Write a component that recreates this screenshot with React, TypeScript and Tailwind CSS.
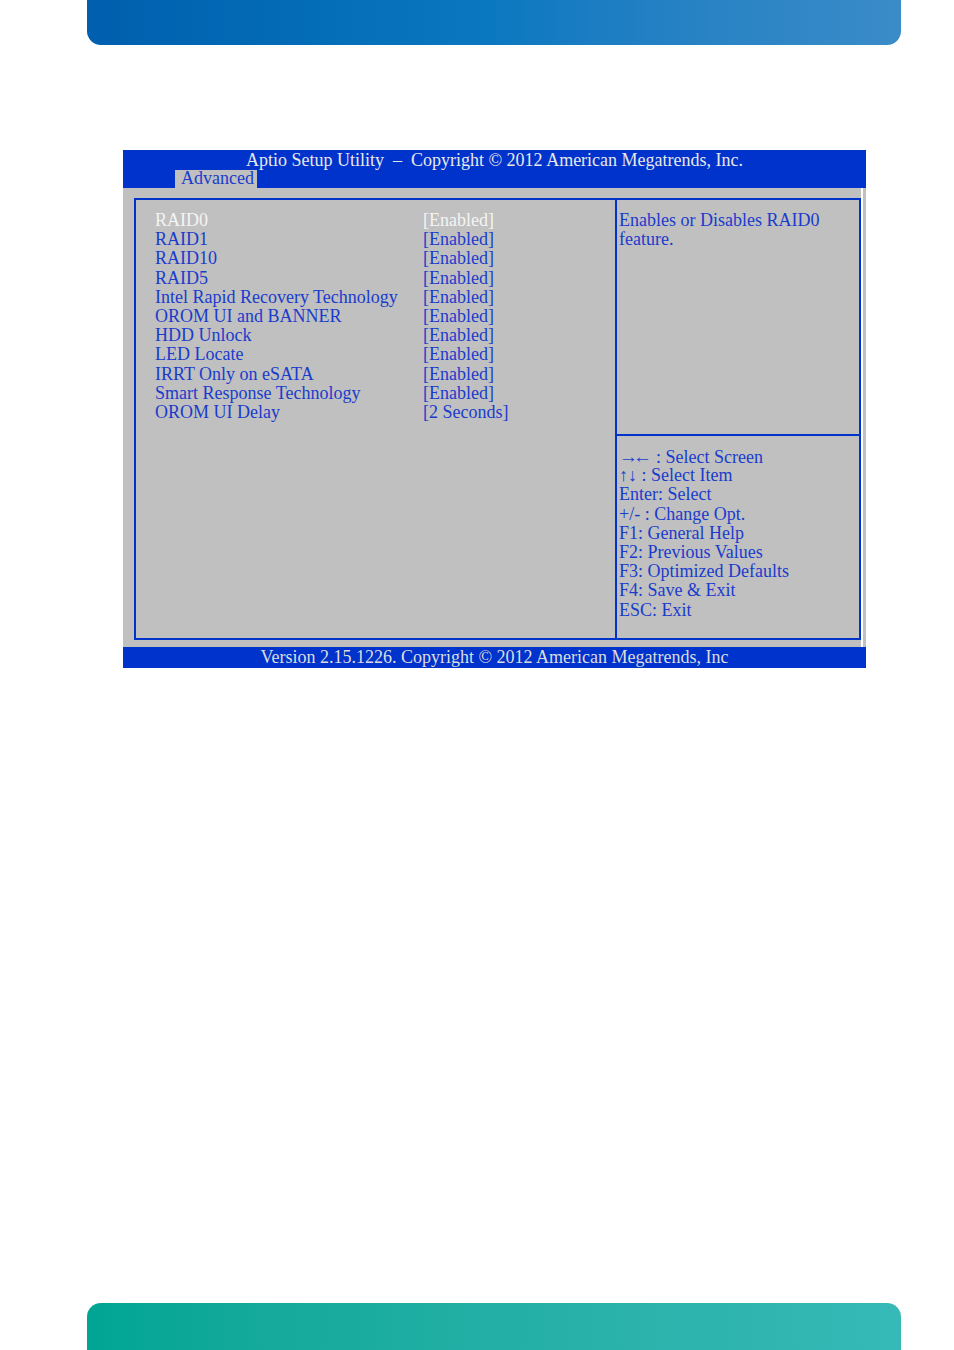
import React from "react";

const items: [string, string][] = [
  ["RAID0", "[Enabled]"],
  ["RAID1", "[Enabled]"],
  ["RAID10", "[Enabled]"],
  ["RAID5", "[Enabled]"],
  ["Intel Rapid Recovery Technology", "[Enabled]"],
  ["OROM UI and BANNER", "[Enabled]"],
  ["HDD Unlock", "[Enabled]"],
  ["LED Locate", "[Enabled]"],
  ["IRRT Only on eSATA", "[Enabled]"],
  ["Smart Response Technology", "[Enabled]"],
  ["OROM UI Delay", "[2 Seconds]"],
];

const keys = [
  "↑↓ : Select Item",
  "Enter: Select",
  "+/- : Change Opt.",
  "F1: General Help",
  "F2: Previous Values",
  "F3: Optimized Defaults",
  "F4: Save & Exit",
  "ESC: Exit",
];

export default function App() {
  return (
    <div
      className="flex h-[1350px] w-[954px] flex-col bg-white"
      style={{ fontFamily: '"Liberation Serif", "Times New Roman", serif' }}
    >
      {/* top brand bar */}
      <div className="ml-[87px] mr-[53px] h-[45px] shrink-0 rounded-b-[14px] bg-gradient-to-r from-[#005fae] via-[#0a78c0] to-[#3a8cc8]" />

      {/* bios screen */}
      <div className="ml-[123px] mt-[105px] w-[743px] text-[18px] leading-[19.2px]">
        <div className="h-[38px] bg-[#0033cc]">
          <div className="flex h-[20px] items-end justify-center text-[#e8e8e8]">
            Aptio Setup Utility&nbsp;&nbsp;–&nbsp;&nbsp;Copyright © 2012 American Megatrends, Inc.
          </div>
          <div className="ml-[52px] flex h-[18px] w-[82px] items-end bg-[#c0c0c0] pl-[6px] text-[#1a3ccc]">
            Advanced
          </div>
        </div>

        <div className="flex h-[459px] bg-[#c0c0c0]">
          <div className="flex-1 pb-[7px] pl-[11px] pt-[10px]">
            <div className="flex h-full border-2 border-[#0033cc]">
              <div className="w-[479px] pl-[19px] pt-[11px]">
                {items.map(([label, value], i) => (
                  <div
                    key={label}
                    className={`grid h-[19.2px] grid-cols-[268px_1fr] ${i === 0 ? "text-[#f4f4f4]" : "text-[#1a3ccc]"}`}
                  >
                    <span className="whitespace-nowrap">{label}</span>
                    <span className="whitespace-nowrap">{value}</span>
                  </div>
                ))}
              </div>
              <div className="w-[2px] bg-[#0033cc]" />
              <div className="flex flex-1 flex-col text-[#1a3ccc]">
                <div className="h-[234px] pl-[2px] pt-[11px]">
                  <div>Enables or Disables RAID0</div>
                  <div>feature.</div>
                </div>
                <div className="h-[2px] bg-[#0033cc]" />
                <div className="pl-[2px] pt-[11px]">
                  <div className="flex h-[19.2px] items-baseline whitespace-nowrap">
                    <span className="inline-block w-[37px] text-[19px] tracking-[-5px]">→←</span>
                    <span>: Select Screen</span>
                  </div>
                  {keys.map((k) => (
                    <div key={k} className="h-[19.2px] whitespace-nowrap">
                      {k}
                    </div>
                  ))}
                </div>
              </div>
            </div>
          </div>
          <div className="w-[2px] bg-white" />
          <div className="w-[3px]" />
        </div>

        <div className="flex h-[21px] items-end justify-center bg-[#0033cc] pb-[1px] text-[#dcdcdc]">
          Version 2.15.1226. Copyright © 2012 American Megatrends, Inc
        </div>
      </div>

      <div className="flex-1" />

      {/* bottom brand bar */}
      <div className="ml-[87px] mr-[53px] h-[47px] shrink-0 rounded-t-[14px] bg-gradient-to-r from-[#00a594] to-[#36b9b7]" />
    </div>
  );
}
